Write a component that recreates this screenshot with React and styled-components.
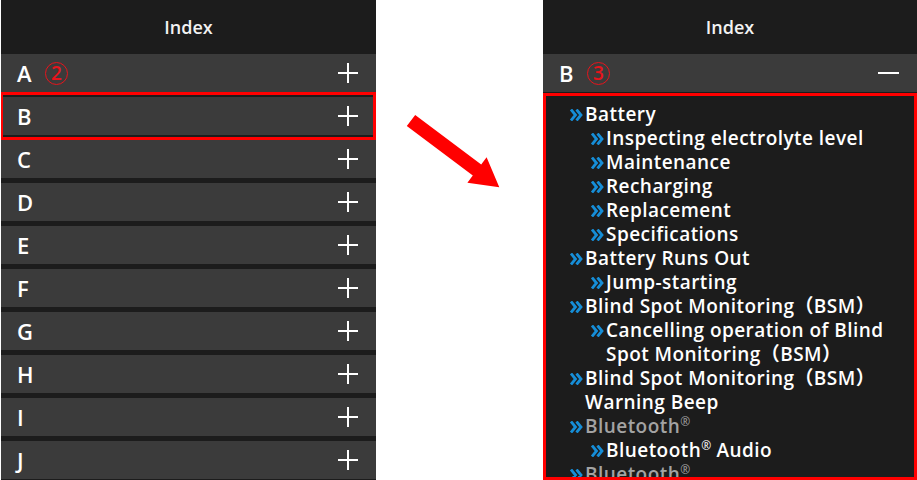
import React from 'react';
import styled, { createGlobalStyle } from 'styled-components';

const GlobalStyle = createGlobalStyle`
    html, body {
        margin: 0;
        padding: 0;
        background: #ffffff;
    }
    body {
        font-family: "Open Sans", "Noto Sans", "Noto Sans CJK JP", sans-serif;
    }
`;

// Page layout: two phone screens with an arrow between them
const Page = styled.div`
    display: flex;
    width: 917px;
    height: 480px;
    overflow: hidden;
    padding-left: 1px;
    box-sizing: border-box;
`;

const Panel = styled.div`
    width: ${p => p.width}px;
    height: 480px;
    flex-shrink: 0;
    background: #1c1c1c;
    display: flex;
    flex-direction: column;
    overflow: hidden;
`;

const Header = styled.div`
    height: 54px;
    flex-shrink: 0;
    display: flex;
    align-items: center;
    justify-content: center;
    color: #f2f2f2;
    font-size: 18px;
    font-weight: 600;
    padding-bottom: 1px;
    box-sizing: border-box;
`;

const RowList = styled.div`
    display: flex;
    flex-direction: column;
    gap: 5px;
`;

const Row = styled.div`
    position: relative;
    height: 38px;
    flex-shrink: 0;
    background: #3b3b3b;
    display: flex;
    align-items: center;
    padding: 0 17px 0 16px;
    color: #ffffff;

    ${p => p.marked && `
        &::after {
            content: '';
            position: absolute;
            left: -1px;
            right: 0;
            top: -5px;
            bottom: -5px;
            border: 3px solid #ff0000;
        }
    `}
`;

const Letter = styled.span`
    font-size: 22px;
    font-weight: 600;
    width: 17px;
`;

// circled step number used as annotation
const Step = styled.span`
    display: inline-flex;
    align-items: center;
    justify-content: center;
    width: 21px;
    height: 21px;
    margin-left: 11px;
    border: 1.6px solid #e8141c;
    border-radius: 50%;
    color: #e8141c;
    font-size: 19px;
    font-weight: 600;
    line-height: 1;
`;

const Toggle = styled.svg`
    margin-left: auto;
    width: 22px;
    height: 22px;
`;

const Gutter = styled.div`
    flex: 1;
`;

const Contents = styled.div`
    flex: 1;
    border: 3px solid #ff0000;
    margin-top: 1px;
    padding: 6px 0 0 24px;
    overflow: hidden;
`;

const Entry = styled.div`
    display: flex;
    align-items: flex-start;
    padding-left: ${p => (p.level - 1) * 21}px;
    font-size: 19px;
    font-weight: 600;
    letter-spacing: 0.45px;
    line-height: 24px;
    color: ${p => (p.muted ? '#a3a3a3' : '#ffffff')};
    white-space: nowrap;
`;

const Chevron = styled.svg`
    width: 15px;
    height: 12px;
    margin-top: 7px;
    flex-shrink: 0;
`;

const Sup = styled.sup`
    font-size: 12px;
    font-weight: 400;
    letter-spacing: 0;
    line-height: 0;
    vertical-align: 7px;
`;

const Plus = () => (
    <Toggle viewBox="0 0 22 22">
        <path d="M11 1v20M1 11h20" stroke="#fff" strokeWidth="2" />
    </Toggle>
);

const Minus = () => (
    <Toggle viewBox="0 0 22 22">
        <path d="M0 11h21" stroke="#fff" strokeWidth="2" />
    </Toggle>
);

const Arrows = () => (
    <Chevron viewBox="0 0 15 12">
        <path d="M1 0.5l4.5 5.5L1 11.5M6.5 0.5l4.5 5.5l-4.5 5.5" fill="none" stroke="#168ed8" strokeWidth="2.8" />
    </Chevron>
);

const reg = <Sup>®</Sup>;

const entries = [
    { level: 1, text: 'Battery' },
    { level: 2, text: 'Inspecting electrolyte level' },
    { level: 2, text: 'Maintenance' },
    { level: 2, text: 'Recharging' },
    { level: 2, text: 'Replacement' },
    { level: 2, text: 'Specifications' },
    { level: 1, text: 'Battery Runs Out' },
    { level: 2, text: 'Jump-starting' },
    { level: 1, text: 'Blind Spot Monitoring（BSM）' },
    { level: 2, text: <>Cancelling operation of Blind<br />Spot Monitoring（BSM）</> },
    { level: 1, text: <>Blind Spot Monitoring（BSM）<br />Warning Beep</> },
    { level: 1, text: <>Bluetooth{reg}</>, muted: true },
    { level: 2, text: <>Bluetooth{reg} Audio</> },
    { level: 1, text: <>Bluetooth{reg}</>, muted: true },
];

const letters = ['A', 'B', 'C', 'D', 'E', 'F', 'G', 'H', 'I', 'J'];

const App = () => (
    <>
        <GlobalStyle />
        <Page>
            <Panel width={375}>
                <Header>Index</Header>
                <RowList>
                    {letters.map(l => (
                        <Row key={l} marked={l === 'B'}>
                            <Letter>{l}</Letter>
                            {l === 'A' && <Step>2</Step>}
                            <Plus />
                        </Row>
                    ))}
                </RowList>
            </Panel>
            <Gutter>
                <svg width="167" height="200" viewBox="0 0 167 200">
                    <polygon
                        points="39.2,114.9 105.2,164.4 110.6,157.2 123.3,187.3 91.4,182.8 96.8,175.6 30.8,126.1"
                        fill="#ff0000"
                    />
                </svg>
            </Gutter>
            <Panel width={374}>
                <Header>Index</Header>
                <Row>
                    <Letter>B</Letter>
                    <Step>3</Step>
                    <Minus />
                </Row>
                <Contents>
                    {entries.map((e, i) => (
                        <Entry key={i} level={e.level} muted={e.muted}>
                            <Arrows />
                            <span>{e.text}</span>
                        </Entry>
                    ))}
                </Contents>
            </Panel>
        </Page>
    </>
);

export default App;
